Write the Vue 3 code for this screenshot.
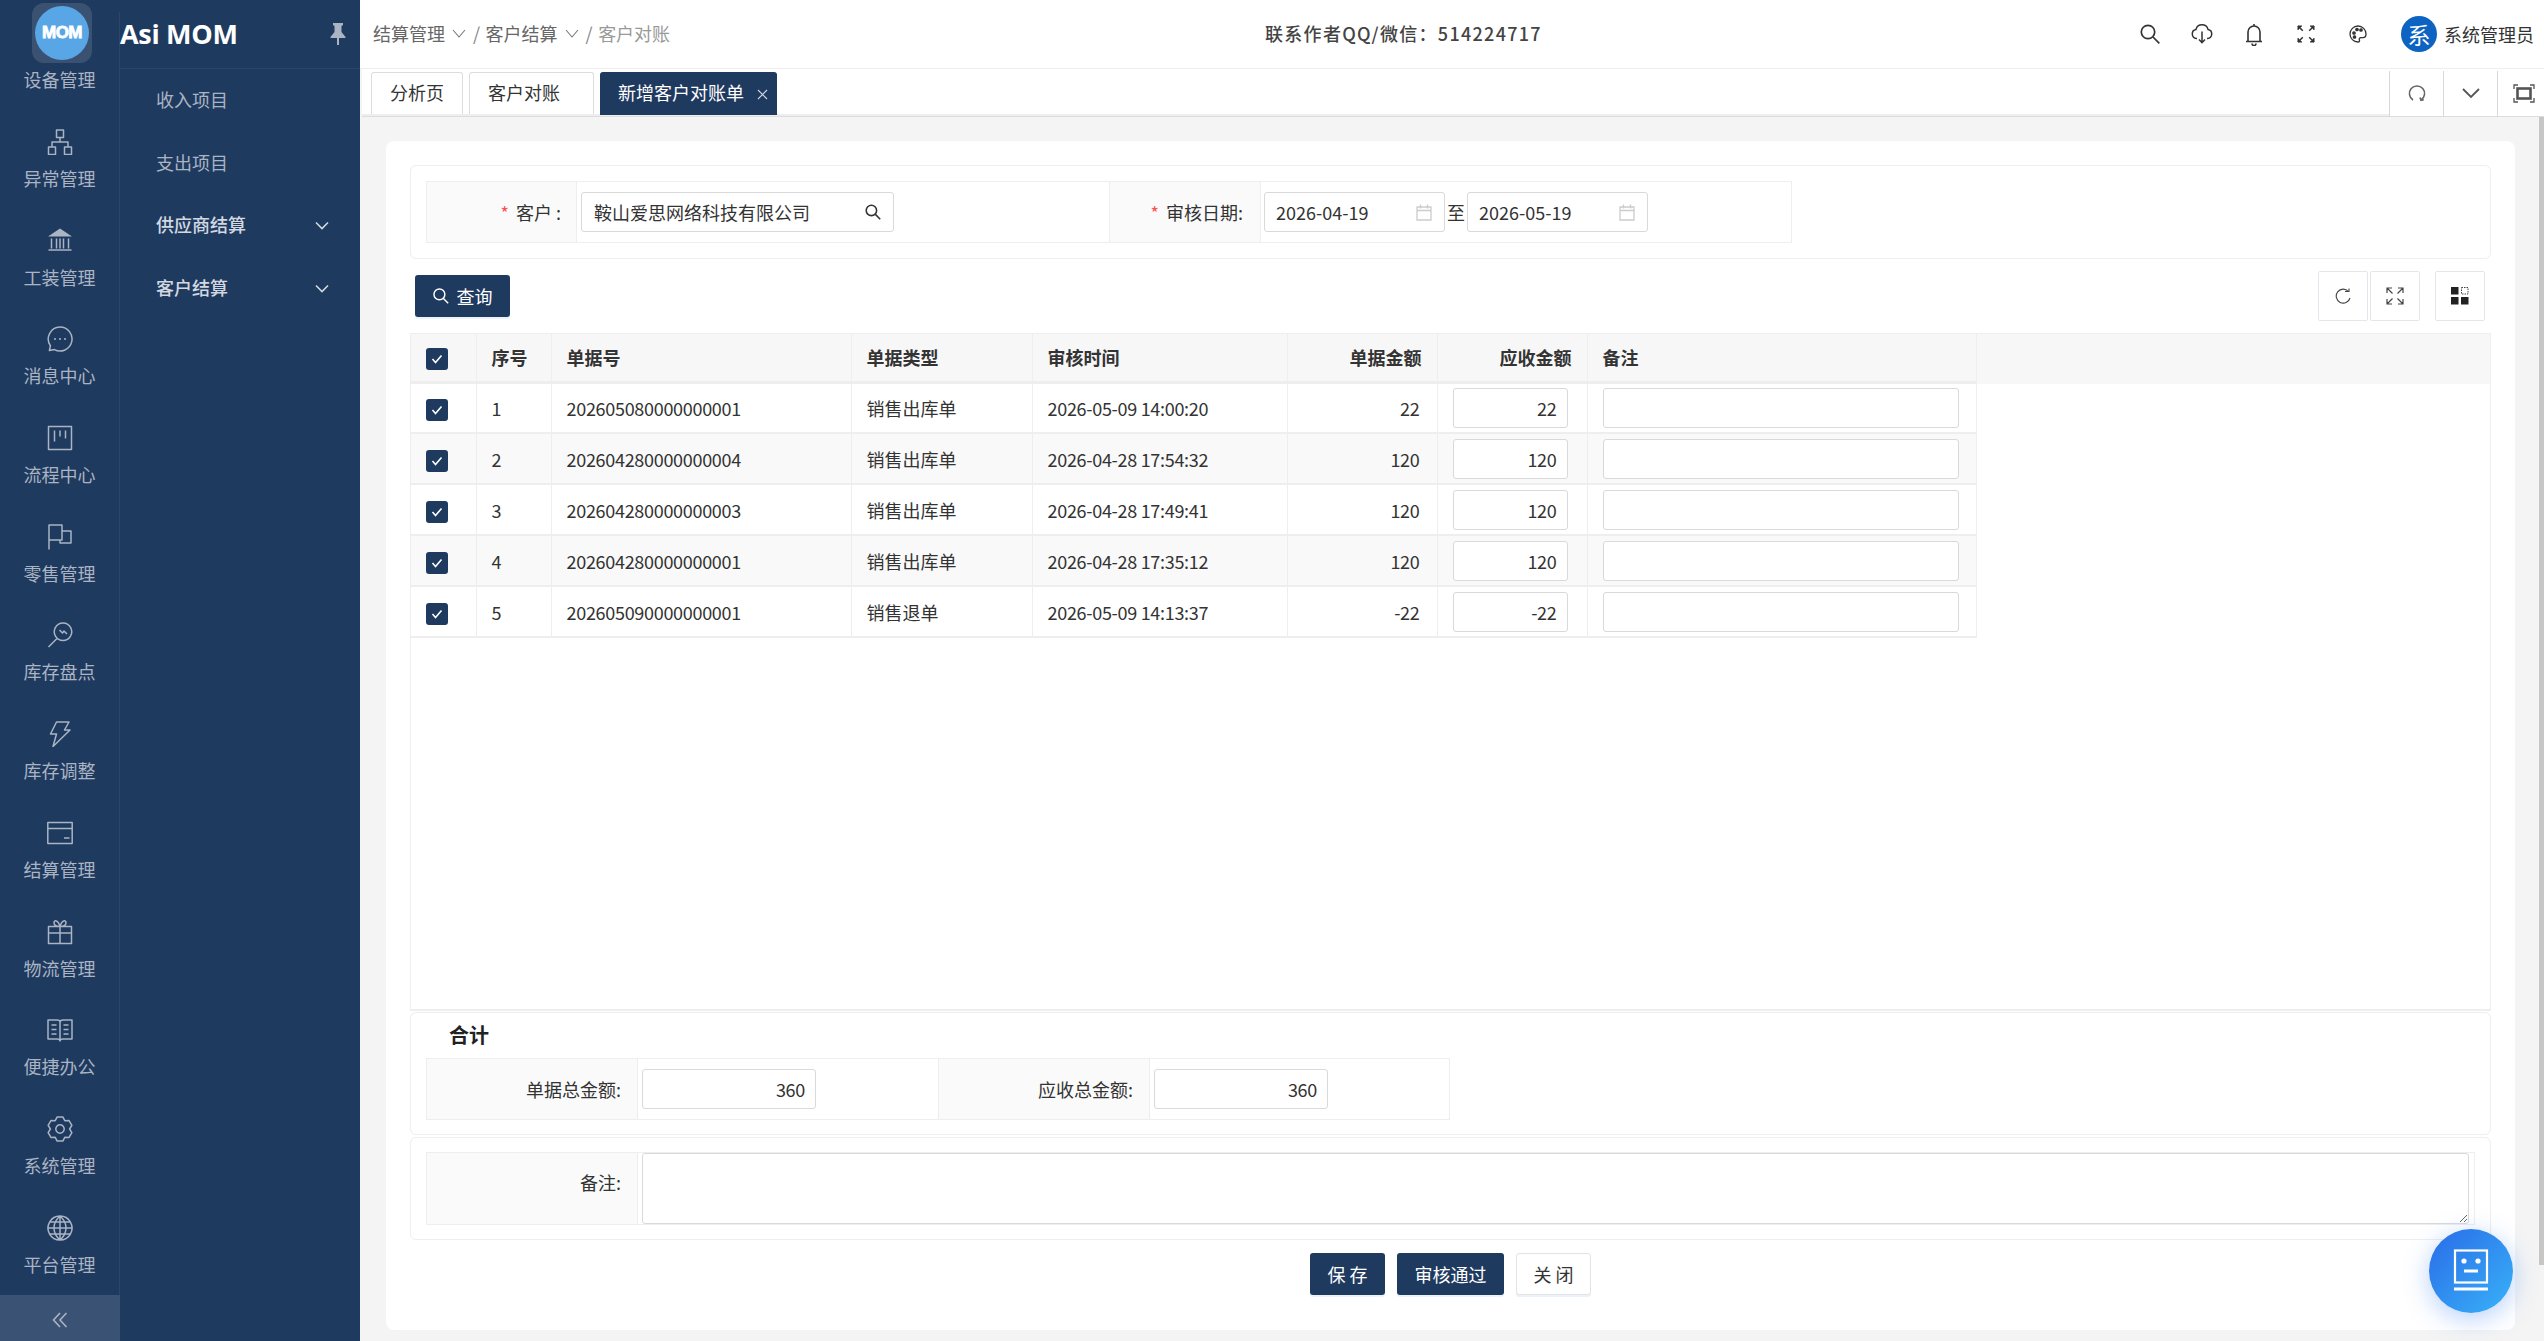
<template>
  <div class="page">
    <!-- 左侧导航 -->
    <aside class="sidebar">
      <div class="logo"><span class="logo-circle">MOM</span></div>
      <div class="rail">
        <div class="rail-list">
          <div v-for="item in railItems" :key="item.label" class="rail-item">
            <svg class="rail-icon" viewBox="0 0 26 26" fill="none" stroke="currentColor" stroke-width="1.5" stroke-linejoin="round">
              <path v-if="item.fill" :d="item.fill" fill="currentColor" stroke="none" />
              <path v-if="item.d" :d="item.d" />
              <path v-if="item.dots" :d="item.dots" stroke-width="2" stroke-linecap="round" />
            </svg>
            <span>{{ item.label }}</span>
          </div>
        </div>
        <div class="collapse">
          <svg width="16" height="16" viewBox="0 0 16 16" fill="none" stroke="currentColor" stroke-width="1.6">
            <path d="M8 1L1.5 8 8 15M14.5 1L8 8l6.5 7" />
          </svg>
        </div>
      </div>
      <div class="menu-col">
        <div class="brand">
          <span>Asi MOM</span>
          <svg class="pin" width="16" height="22" viewBox="0 0 16 22" fill="currentColor">
            <path d="M3 0h10v2l-1.5 1v6L15.5 14v1H9v7H7v-7H.5v-1L4.500 9V3L3 2z" />
          </svg>
        </div>
        <nav class="menu">
          <div v-for="m in menuItems" :key="m.label" class="menu-item" :class="{ group: m.group }">
            <span>{{ m.label }}</span>
            <svg v-if="m.group" width="14" height="9" viewBox="0 0 14 9" fill="none" stroke="currentColor" stroke-width="1.6">
              <path d="M1 1.500l6 6 6-6" />
            </svg>
          </div>
        </nav>
      </div>
    </aside>

    <div class="main">
      <header class="topbar">
        <div class="crumbs">
          <span>结算管理</span>
          <svg class="crumb-arrow" width="14" height="9" viewBox="0 0 14 9" fill="none" stroke="currentColor" stroke-width="1.1"><path d="M1 1l6 7 6-7" /></svg>
          <span class="slash">/</span>
          <span>客户结算</span>
          <svg class="crumb-arrow" width="14" height="9" viewBox="0 0 14 9" fill="none" stroke="currentColor" stroke-width="1.1"><path d="M1 1l6 7 6-7" /></svg>
          <span class="slash">/</span>
          <span class="crumb-last">客户对账</span>
        </div>
        <div class="contact">联系作者QQ/微信：514224717</div>
        <div class="top-right">
          <div class="top-icon">
            <svg width="20" height="20" viewBox="0 0 20 20" fill="none" stroke="currentColor" stroke-width="1.7"><circle cx="8" cy="8" r="6.700" /><path d="M13 13l6.300 6.300" /></svg>
          </div>
          <div class="top-icon">
            <svg width="22" height="20" viewBox="0 0 22 20" fill="none" stroke="currentColor" stroke-width="1.5"><path d="M6 14.500H5.500a4.500 4.500 0 0 1-.6-8.900 6.300 6.300 0 0 1 12.200 0 4.500 4.500 0 0 1-.6 8.900H16" /><path d="M11 7.500v11M8 15.500l3 3.200 3-3.200" /></svg>
          </div>
          <div class="top-icon">
            <svg width="18" height="23" viewBox="0 0 18 23" fill="none" stroke="currentColor" stroke-width="1.6"><path d="M1 18.500h16M3 18.500V9a6 6 0 0 1 12 0v9.500M9 3V1" /><path d="M7 20.500a2 2 0 0 0 4 0" /></svg>
          </div>
          <div class="top-icon">
            <svg width="18" height="18" viewBox="0 0 18 18" fill="none" stroke="currentColor" stroke-width="1.5"><path d="M1 1l4.800 4.800M17 1l-4.800 4.800M1 17l4.800-4.800M17 17l-4.800-4.800" /><path d="M1 5V1h4M13 1h4v4M1 13v4h4M17 13v4h-4" fill="currentColor" stroke-width="1" /></svg>
          </div>
          <div class="top-icon">
            <svg width="18" height="18" viewBox="0 0 18 18" fill="none" stroke="currentColor" stroke-width="1.3"><path d="M9 1a8 8 0 0 0 0 16c1.500 0 1.800-1 1.400-2-.5-1.300.2-2.300 1.600-2.300h2c1.800 0 3-1.300 3-3.700 0-4.400-3.600-8-8-8z" /><circle cx="5" cy="8" r="1.200" fill="currentColor" /><circle cx="8" cy="4.500" r="1.200" fill="currentColor" /><circle cx="12" cy="5" r="1.200" fill="currentColor" /><circle cx="5.500" cy="12" r="1.200" fill="currentColor" /></svg>
          </div>
          <div class="user">
            <span class="avatar">系</span>
            <span>系统管理员</span>
          </div>
        </div>
      </header>

      <div class="tabbar">
        <div class="tabs">
          <div class="tab">分析页</div>
          <div class="tab tab-customer">客户对账</div>
          <div class="tab active">
            <span>新增客户对账单</span>
            <svg width="11" height="11" viewBox="0 0 11 11" fill="none" stroke="currentColor" stroke-width="1.100"><path d="M1 1l9 9M10 1l-9 9" /></svg>
          </div>
        </div>
        <div class="tab-tools">
          <div class="tab-tool">
            <svg width="18" height="18" viewBox="0 0 18 18" fill="none" stroke="#666" stroke-width="1.600"><path d="M5 16a7.600 7.600 0 1 1 8 0" /><path d="M12 13.500l1 2.800 2.800-.6" /></svg>
          </div>
          <div class="tab-tool">
            <svg width="18" height="12" viewBox="0 0 18 12" fill="none" stroke="#555" stroke-width="1.800"><path d="M1 2l8 8 8-8" /></svg>
          </div>
          <div class="tab-tool">
            <svg width="22" height="19" viewBox="0 0 22 19" fill="none" stroke="#555" stroke-width="1.300"><path d="M1 5V1h4M17 1h4v4M1 14v4h4M21 14v4h-4" /><rect x="4.500" y="4.500" width="13" height="10" stroke-width="2.600" /></svg>
          </div>
        </div>
      </div>

      <div class="content">
        <div class="card">
          <section class="box query-box">
            <div class="form-row query-row">
              <div class="form-label w150 customer-label"><i>*</i> 客户 :</div>
              <div class="form-value w532">
                <div class="input-wrap customer">
                  <input value="鞍山爱思网络科技有限公司" readonly />
                  <svg width="16" height="16" viewBox="0 0 20 20" fill="none" stroke="#333" stroke-width="2"><circle cx="8" cy="8" r="6.500" /><path d="M13 13l6 6" /></svg>
                </div>
              </div>
              <div class="form-label w152"><i>*</i> 审核日期:</div>
              <div class="form-value dates">
                <div class="input-wrap date">
                  <input value="2026-04-19" readonly />
                  <svg width="16" height="17" viewBox="0 0 16 17" fill="none" stroke="#ccc" stroke-width="1.300"><path d="M1 3h14v13H1zM1 6.500h14M4.500 .5v4M11.500 .5v4" /></svg>
                </div>
                <span class="to">至</span>
                <div class="input-wrap date">
                  <input value="2026-05-19" readonly />
                  <svg width="16" height="17" viewBox="0 0 16 17" fill="none" stroke="#ccc" stroke-width="1.300"><path d="M1 3h14v13H1zM1 6.500h14M4.500 .5v4M11.500 .5v4" /></svg>
                </div>
              </div>
            </div>
          </section>

          <div class="toolbar">
            <button class="btn primary search-btn">
              <svg width="16" height="16" viewBox="0 0 20 20" fill="none" stroke="#fff" stroke-width="1.800"><circle cx="8" cy="8" r="6.800" /><path d="M13 13l6 6" /></svg>
              查询
            </button>
            <div class="tool-group">
              <div class="tool-btn">
                <svg width="16" height="16" viewBox="0 0 16 16" fill="none" stroke="#444" stroke-width="1.100"><path d="M13.500 3.500A7 7 0 1 0 15 10" /><path d="M10 3.500h4v-3" /></svg>
              </div>
              <div class="tool-btn">
                <svg width="18" height="18" viewBox="0 0 18 18" fill="none" stroke="#444" stroke-width="1.200"><path d="M1 6V1h5M1 1l5.500 5.500M12 1h5v5M17 1l-5.500 5.500M1 12v5h5M1 17l5.500-5.500M17 12v5h-5M17 17l-5.500-5.500" /></svg>
              </div>
              <div class="tool-btn last">
                <svg width="18" height="18" viewBox="0 0 18 18" fill="#222"><rect x="0" y="0" width="7.500" height="7.500" /><rect x="0" y="10" width="7.500" height="7.500" /><rect x="10" y="10" width="7.500" height="7.500" /><rect x="10.500" y=".5" width="6.500" height="6.500" fill="none" stroke="#444" stroke-dasharray="1.500 1" /></svg>
              </div>
            </div>
          </div>

          <section class="table-box">
            <table class="grid">
              <colgroup>
                <col v-for="w in colWidths" :key="w.k" :style="{ width: w.v + 'px' }" />
              </colgroup>
              <thead>
                <tr>
                  <th><span class="check"><svg width="12" height="10" viewBox="0 0 12 10" fill="none" stroke="#fff" stroke-width="1.600"><path d="M1.500 5l3 3.500 6-7" /></svg></span></th>
                  <th>序号</th>
                  <th>单据号</th>
                  <th>单据类型</th>
                  <th>审核时间</th>
                  <th class="right">单据金额</th>
                  <th class="right">应收金额</th>
                  <th>备注</th>
                </tr>
              </thead>
              <tbody>
                <tr v-for="(row, i) in rows" :key="row.no + i">
                  <td><span class="check"><svg width="12" height="10" viewBox="0 0 12 10" fill="none" stroke="#fff" stroke-width="1.600"><path d="M1.500 5l3 3.500 6-7" /></svg></span></td>
                  <td class="num">{{ i + 1 }}</td>
                  <td class="num">{{ row.no }}</td>
                  <td>{{ row.type }}</td>
                  <td class="num">{{ row.time }}</td>
                  <td class="num right amount">{{ row.amount }}</td>
                  <td class="edit edit-amount"><input class="cell-input num-input" :value="row.amount" readonly /></td>
                  <td class="edit edit-note"><input class="cell-input note-input" readonly /></td>
                </tr>
              </tbody>
            </table>
          </section>

          <section class="box sum-box">
            <div class="sum-title">合计</div>
            <div class="form-row sum-row">
              <div class="form-label w211">单据总金额:</div>
              <div class="form-value w301"><input class="cell-input total" value="360" readonly /></div>
              <div class="form-label w211">应收总金额:</div>
              <div class="form-value w301 end"><input class="cell-input total" value="360" readonly /></div>
            </div>
          </section>

          <section class="box note-box">
            <div class="form-row note-row">
              <div class="form-label w211 note-label">备注:</div>
              <div class="form-value note-value"><textarea></textarea></div>
            </div>
          </section>

          <div class="actions">
            <button class="btn primary save">保 存</button>
            <button class="btn primary pass">审核通过</button>
            <button class="btn plain">关 闭</button>
          </div>
        </div>
        <div class="scroll-thumb"></div>
      </div>
    </div>

    <div class="ai-btn">
      <svg width="36" height="44" viewBox="0 0 36 44" fill="none" stroke="#fff" stroke-width="2.200">
        <rect x="2" y="1.500" width="32" height="32" />
        <circle cx="11" cy="12" r="2.600" fill="#fff" stroke="none" />
        <circle cx="25" cy="12" r="2.600" fill="#fff" stroke="none" />
        <path d="M11 22h14M1 40h34" stroke-width="3" />
      </svg>
    </div>
  </div>
</template>

<script setup>
// 齿轮图标的外轮廓,六个齿
function gearPath() {
  const pts = [];
  for (let i = 0; i < 6; i++) {
    const a = (i * 60 - 90) * (Math.PI / 180);
    [[-30, 9.6], [-13, 12.4], [13, 12.4]].forEach(([off, r]) => {
      const t = a + (off * Math.PI) / 180;
      pts.push((13 + r * Math.cos(t)).toFixed(2) + " " + (13 + r * Math.sin(t)).toFixed(2));
    });
  }
  return "M" + pts.join("L") + "z M13 8.800a4.200 4.200 0 1 0 .01 0z";
}

const railItems = [
  { label: "设备管理" },
  { label: "异常管理", d: "M9.500 1h7v7.500h-7zM1.500 18h7v7.500h-7zM17.500 18h7v7.500h-7zM13 8.500V13M5 18v-5h16v5" },
  { label: "工装管理", fill: "M13 .5L25 8.500H1z", d: "M4.500 10.500v10M9.500 10.500v10M13 10.500v10M16.500 10.500v10M21.500 10.500v10M1.500 22h23" },
  { label: "消息中心", d: "M13 1a12 12 0 1 1-5.600 22.600l-5 .9 1-4.700A12 12 0 0 1 13 1z", dots: "M8 13h.01M13 13h.01M18 13h.01" },
  { label: "流程中心", d: "M1.500 1.500h23v23h-23zM7.500 5.500v11M13 5.500v6M18.500 5.500v8" },
  { label: "零售管理", d: "M2 25.500V1h13v15H2M15 7h9v12H13v-3" },
  { label: "库存盘点", d: "M16 1a8.700 8.700 0 1 1-.01 0zM10 16.500L1.500 25M12.500 8l3 3 1.500-2 3 3" },
  { label: "库存调整", d: "M9.500 1H22l-4.500 8H23L6 25.500 9.500 13H3.500z" },
  { label: "结算管理", d: "M.8 2.500h24.400v21H.8zM.8 8.500h24.400M17 18h5.500" },
  { label: "物流管理", d: "M1.500 7.500h23v17h-23zM1.500 14h23M13 7.500v17M13 7.500C9 7.500 7 5.500 7 3.500 7 1 11 .5 13 7.500M13 7.500c4 0 6-2 6-4 0-2.500-4-3-6 4" },
  { label: "便捷办公", d: "M1 3h9c1.500 0 3 .7 3 2 0-1.300 1.500-2 3-2h9v19h-9c-1.500 0-3 .4-3 2 0-1.600-1.500-2-3-2H1zM13 5v19M4.500 8h5M4.500 12.500h5M4.500 17h5M16.500 8h5M16.500 12.500h5M16.500 17h5" },
  { label: "系统管理", d: gearPath() },
  { label: "平台管理", d: "M13 1a12 12 0 1 0 .01 0zM1 13h24M3 7h20M3 19h20M13 1v24M13 1c-8 7-8 17 0 24M13 1c8 7 8 17 0 24" },
];

const menuItems = [
  { label: "收入项目" },
  { label: "支出项目" },
  { label: "供应商结算", group: true },
  { label: "客户结算", group: true },
];

const colWidths = [65, 75, 300, 181, 255, 150, 150, 389].map((v, k) => ({ k, v }));

const rows = [
  { no: "202605080000000001", type: "销售出库单", time: "2026-05-09 14:00:20", amount: "22" },
  { no: "202604280000000004", type: "销售出库单", time: "2026-04-28 17:54:32", amount: "120" },
  { no: "202604280000000003", type: "销售出库单", time: "2026-04-28 17:49:41", amount: "120" },
  { no: "202604280000000001", type: "销售出库单", time: "2026-04-28 17:35:12", amount: "120" },
  { no: "202605090000000001", type: "销售退单", time: "2026-05-09 14:13:37", amount: "-22" },
];
</script>

<style>
html,
body {
  margin: 0;
  overflow: hidden;
}
</style>

<style scoped>
* {
  box-sizing: border-box;
}

.page {
  position: relative;
  display: flex;
  width: 100%;
  height: 100vh;
  overflow: hidden;
  background: #f4f4f4;
  color: #333;
  font-family: "Noto Sans CJK SC", "Liberation Sans", sans-serif;
  font-size: 18px;
}

/* 侧边栏 */
.sidebar {
  position: relative;
  display: flex;
  flex: 0 0 360px;
  background: #1f3a5f;
}

.logo {
  position: absolute;
  left: 32px;
  top: 3px;
  display: flex;
  align-items: center;
  justify-content: center;
  width: 60px;
  height: 60px;
  border-radius: 12px;
  background: rgba(255, 255, 255, 0.12);
}

.logo-circle {
  display: flex;
  align-items: center;
  justify-content: center;
  width: 54px;
  height: 54px;
  border-radius: 50%;
  background: #58a6e6;
  color: #fff;
  font-family: "Liberation Sans", sans-serif;
  font-size: 17px;
  font-weight: 700;
  letter-spacing: -0.5px;
  -webkit-text-stroke: 0.8px #fff;
}

.rail {
  display: flex;
  flex-direction: column;
  flex: 0 0 120px;
  padding-top: 12px;
  color: #aab4c3;
}

.rail-list {
  flex: 1;
  display: grid;
  grid-auto-rows: 1fr;
  border-right: 1px solid #2c4669;
}

.rail-item {
  display: flex;
  flex-direction: column;
  align-items: center;
  justify-content: center;
  gap: 11px;
  line-height: 25px;
}

.rail-item:first-child .rail-icon {
  visibility: hidden;
}

.rail-icon {
  width: 26px;
  height: 26px;
}

.collapse {
  display: flex;
  align-items: center;
  justify-content: center;
  height: 46px;
  background: #3a5274;
  padding-top: 4px;
}

.menu-col {
  flex: 1;
  display: flex;
  flex-direction: column;
}

.brand {
  display: flex;
  align-items: center;
  justify-content: space-between;
  height: 68px;
  padding: 0 14px 0 0;
  color: #fff;
  font-family: "Open Sans", sans-serif;
  font-size: 27px;
  font-weight: 700;
  letter-spacing: -0.3px;
}

.brand span {
  margin-top: -2px;
}

.pin {
  color: #aab4c3;
}

.menu {
  flex: 1;
  border-top: 1px solid #2c4669;
}

.menu-item {
  display: flex;
  align-items: center;
  justify-content: space-between;
  height: 62.6px;
  padding: 0 31px 0 36px;
  color: #aab4c3;
}

.menu-item span {
  position: relative;
  top: -1px;
}

.menu-item.group {
  color: #d2d8e0;
  font-weight: 500;
}

/* 顶部 */
.main {
  flex: 1;
  min-width: 0;
  display: flex;
  flex-direction: column;
}

.topbar {
  display: flex;
  align-items: center;
  height: 69px;
  padding-left: 13px;
  padding-right: 10px;
  background: #fff;
  border-bottom: 1px solid #eee;
}

.crumbs {
  display: flex;
  align-items: center;
  flex: 0 0 892px;
  color: #666;
  margin-top: -3px;
}

.crumb-arrow {
  margin: 2px 0 0 7px;
  color: #777;
}

.slash {
  margin: 0 5.5px 0 7px;
  color: #888;
}

.crumb-last {
  color: #999;
}

.contact {
  font-weight: 500;
  color: #444;
  letter-spacing: 1.3px;
  margin-top: -2px;
}

.top-right {
  margin-left: auto;
  display: flex;
  align-items: center;
  color: #333;
}

.top-icon {
  display: flex;
  align-items: center;
  justify-content: center;
  width: 52px;
}

.user {
  display: flex;
  align-items: center;
  gap: 7px;
  margin-left: 17px;
}

.avatar {
  display: flex;
  align-items: center;
  justify-content: center;
  width: 36px;
  height: 36px;
  border-radius: 50%;
  background: #0d63c1;
  color: #fff;
  font-size: 23px;
}

/* 标签页 */
.tabbar {
  display: flex;
  justify-content: space-between;
  height: 48px;
  margin-left: 2px;
  background: #fff;
  border-bottom: 1px solid #ddd;
}

.tabs {
  display: flex;
  gap: 6px;
  flex: 1;
  padding: 3px 0 0 9px;
  border-bottom: 2px solid #eee;
}

.tab {
  display: flex;
  align-items: center;
  justify-content: center;
  height: 42px;
  width: 92px;
  padding-bottom: 3px;
  border: 1px solid #ddd;
  border-bottom: none;
  border-radius: 3px 3px 0 0;
}

.tab-customer {
  width: 125px;
  justify-content: flex-start;
  padding-left: 18px;
}

.tab.active {
  width: 177px;
  height: 43px;
  justify-content: flex-start;
  gap: 13px;
  padding-left: 18px;
  border: none;
  background: #1f3a5f;
  color: #fff;
}

.tab.active svg {
  margin-top: 5px;
  color: #d2d8e0;
}

.tab-tools {
  display: flex;
  padding-top: 2px;
}

.tab-tool {
  display: flex;
  align-items: center;
  justify-content: center;
  width: 54px;
  border-left: 1px solid #d8d8d8;
  margin-bottom: -1px;
  padding-bottom: 2px;
}

.tab-tool:last-child {
  width: 47px;
  padding-left: 6px;
}

/* 内容区 */
.content {
  position: relative;
  flex: 1;
  min-height: 0;
  padding: 24px 29px 11px 26px;
}

.scroll-thumb {
  position: absolute;
  right: 0;
  top: 0;
  width: 5px;
  height: 1148px;
  background: #c6c6c6;
}

.card {
  display: flex;
  flex-direction: column;
  height: 100%;
  padding: 24px 24px 0;
  border-radius: 8px;
  background: #fff;
}

.box {
  border: 1px solid #eee;
  border-radius: 6px;
}

.query-box {
  flex: 0 0 93px;
  padding: 15px;
}

.form-row {
  display: flex;
  border: 1px solid #eee;
}

.query-row {
  width: 1366px;
  height: 62px;
}

.form-label {
  display: flex;
  align-items: center;
  justify-content: flex-end;
  flex-shrink: 0;
  padding-right: 16px;
  white-space: pre-wrap;
  background: #fafafa;
  border-right: 1px solid #eee;
}

.form-label i {
  margin-right: 3px;
  color: #ff4d4f;
  font-style: normal;
}

.customer-label {
  padding-right: 15px;
}

.note-label {
  padding-bottom: 14px;
}

.form-value {
  display: flex;
  align-items: center;
  padding-left: 3px;
  flex-shrink: 0;
}

.w150 { width: 150px; }
.w152 { width: 152px; border-left: 1px solid #eee; padding-right: 17px; }
.w211 { width: 211px; }
.w301 { width: 301px; border-right: 1px solid #eee; padding-left: 4px; }
.w301.end { border-right: none; width: 300px; }
.w532 { width: 532px; padding-left: 4px; }

.dates {
  flex: 1;
  gap: 2px;
}

.to {
  font-size: 18px;
}

.input-wrap {
  display: flex;
  align-items: center;
  height: 40px;
  padding: 0 12px;
  border: 1px solid #d9d9d9;
  border-radius: 3px;
  background: #fff;
}

.input-wrap input {
  flex: 1;
  min-width: 0;
  border: none;
  outline: none;
  padding: 0;
  font: inherit;
  color: #333;
  background: transparent;
}

.customer {
  width: 313px;
}

.date {
  width: 181px;
  padding-left: 11px;
}

.toolbar {
  display: flex;
  justify-content: space-between;
  align-items: flex-start;
  height: 50px;
  margin-top: 12px;
  padding: 0 6px 0 5px;
  flex-shrink: 0;
}

.btn {
  display: inline-flex;
  align-items: center;
  justify-content: center;
  height: 42px;
  border: none;
  border-radius: 3px;
  font: inherit;
  box-shadow: 0 2px 0 #eaf2fb;
}

.primary {
  background: #1f3a5f;
  color: #fff;
}

.search-btn {
  width: 95px;
  gap: 8px;
  margin-top: 4px;
}

.tool-group {
  display: flex;
  gap: 2px;
}

.tool-btn {
  display: flex;
  align-items: center;
  justify-content: center;
  width: 50px;
  height: 50px;
  border: 1px solid #e3e6ea;
  border-radius: 2px;
}

.tool-btn.last {
  margin-left: 13px;
}

/* 表格 */
.table-box {
  flex: 0 0 678px;
  margin-top: 12px;
  border: 1px solid #eee;
  border-bottom-width: 2px;
  background: linear-gradient(#f7f7f7, #f7f7f7) no-repeat top / 100% 50px;
}

.grid {
  width: 1565px;
  table-layout: fixed;
  border-collapse: collapse;
}

.grid th,
.grid td {
  height: 51px;
  padding: 0 15px;
  border-right: 1px solid #eee;
  border-bottom: 2px solid #eee;
  text-align: left;
}

.grid th {
  height: 48px;
  padding-bottom: 1px;
  font-weight: 700;
  color: #333;
  background: #f7f7f7;
  border-bottom-width: 3px;
}

.grid tbody tr:nth-child(even) td {
  background: #f9f9f9;
}

.grid .right {
  text-align: right;
}

.grid .amount {
  padding-right: 17px;
}

.num {
  letter-spacing: -0.3px;
}

.grid .edit-amount {
  padding: 0 19px 0 15px;
}

.grid .edit-note {
  padding: 0 17px 0 15px;
}

.check {
  display: inline-flex;
  align-items: center;
  justify-content: center;
  width: 22px;
  height: 22px;
  border-radius: 3px;
  background: #1f3a5f;
  vertical-align: middle;
}

.cell-input {
  display: block;
  width: 100%;
  height: 40px;
  padding: 0 10px;
  border: 1px solid #d9d9d9;
  border-radius: 3px;
  outline: none;
  font: inherit;
  color: #333;
  background: #fff;
  letter-spacing: -0.3px;
}

.num-input {
  text-align: right;
}

.sum-box {
  flex: 0 0 123px;
  margin-top: 1px;
  padding: 0 15px;
}

.sum-title {
  height: 45px;
  padding: 7px 0 0 23px;
  font-size: 20px;
  font-weight: 700;
  line-height: 30px;
  color: #222;
}

.sum-row {
  width: 1024px;
  height: 62px;
}

.total {
  width: 174px;
  text-align: right;
}

.note-box {
  flex: 0 0 103px;
  margin-top: 2px;
  padding: 14px 15px;
}

.note-row {
  height: 73px;
  width: 2049px;
}

.note-value {
  flex: 1;
  padding: 0 5px 0 4px;
  align-items: stretch;
}

.note-value textarea {
  flex: 1;
  border: 1px solid #d9d9d9;
  border-radius: 3px;
  outline: none;
  resize: vertical;
  background: #fff;
}

.actions {
  display: flex;
  justify-content: center;
  gap: 12px;
  margin-top: 13px;
}

.save {
  width: 75px;
}

.pass {
  width: 107px;
}

.plain {
  width: 75px;
  border: 1px solid #e3e3e3;
  background: #fff;
  color: #333;
}

/* 右下角悬浮按钮 */
.ai-btn {
  position: absolute;
  right: 31px;
  bottom: 28px;
  display: flex;
  align-items: center;
  justify-content: center;
  width: 84px;
  height: 84px;
  border-radius: 50%;
  background: linear-gradient(135deg, #2a6ce8, #38b2f8);
  box-shadow: 0 6px 26px rgba(45, 120, 240, 0.35);
}
</style>
